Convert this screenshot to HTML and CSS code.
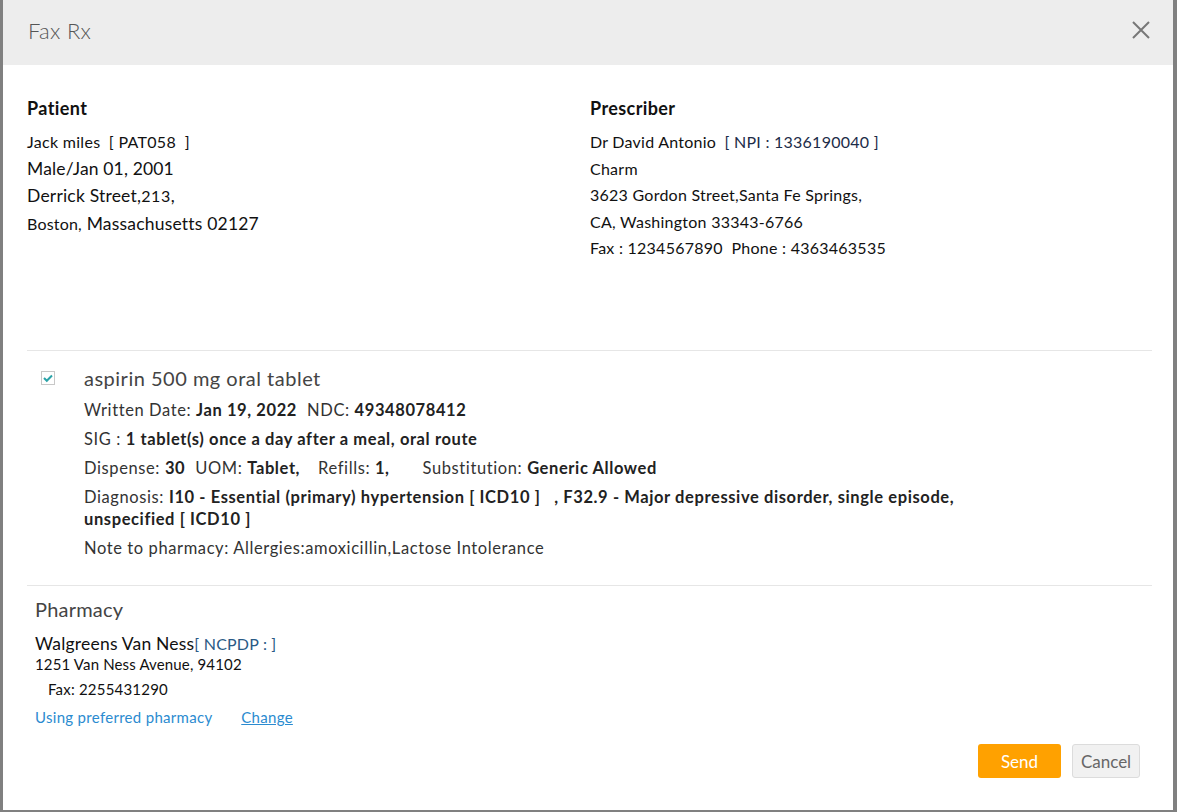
FILE: index.html
```html
<!DOCTYPE html>
<html lang="en">
  <head>
    <meta charset="UTF-8" />
    <title>Fax Rx</title>
    <link rel="stylesheet" href="styles.css">
  </head>
  <body>
    <div class="modal">
      <div class="modal-header">
        <span class="modal-title">Fax Rx</span>
        <button class="close" aria-label="Close">
          <svg width="18" height="18" viewBox="0 0 18 18">
            <path d="M1 1 L17 17 M17 1 L1 17" stroke="#777" stroke-width="2" fill="none" />
          </svg>
        </button>
      </div>

      <div class="modal-body">
        <div class="people">
          <div class="patient">
            <h3>Patient</h3>
            <div class="line small">Jack miles <span class="pid">[ PAT058&nbsp; ]</span></div>
            <div class="line big">Male/Jan 01, 2001</div>
            <div class="line big street">Derrick Street,<span class="num">213</span>,</div>
            <div class="line mid"><span class="num">Boston,</span> Massachusetts 02127</div>
          </div>
          <div class="prescriber">
            <h3>Prescriber</h3>
            <div class="line">Dr David Antonio <span class="ref">[ NPI : 1336190040 ]</span></div>
            <div class="line">Charm</div>
            <div class="line">3623 Gordon Street,Santa Fe Springs,</div>
            <div class="line">CA, Washington 33343-6766</div>
            <div class="line">Fax : 1234567890&nbsp; Phone : 4363463535</div>
          </div>
        </div>

        <div class="drug">
          <span class="check">
            <svg width="14" height="14" viewBox="0 0 14 14">
              <rect x="0.5" y="0.5" width="13" height="13" fill="#fff" stroke="#c8c8c8" />
              <path d="M3 7 L5.8 9.8 L11 4.5" stroke="#2aa3a8" stroke-width="2" fill="none" />
            </svg>
          </span>
          <div class="drug-info">
            <div class="drug-name">aspirin 500 mg oral tablet</div>
            <div class="row">Written Date: <b>Jan 19, 2022</b><span class="gap">NDC: <b>49348078412</b></span></div>
            <div class="row">SIG : <b>1 tablet(s) once a day after a meal, oral route</b></div>
            <div class="row">
              Dispense: <b>30</b><span class="gap">UOM: <b>Tablet,</b></span><span class="refills">Refills: <b>1,</b></span><span class="subst">Substitution: <b>Generic Allowed</b></span>
            </div>
            <div class="row">Diagnosis: <b>I10 - Essential (primary) hypertension [ ICD10 ] &nbsp; , F32.9 - Major depressive disorder, single episode,</b><br><b>unspecified [ ICD10 ]</b></div>
            <div class="row">Note to pharmacy: Allergies:amoxicillin,Lactose Intolerance</div>
          </div>
        </div>

        <div class="pharmacy">
          <h4>Pharmacy</h4>
          <div class="ph-name">Walgreens Van Ness<span class="ncpdp">[ NCPDP : ]</span></div>
          <div class="ph-line">1251 Van Ness Avenue, 94102</div>
          <div class="ph-fax">Fax: 2255431290</div>
          <div class="ph-links">
            <span class="preferred">Using preferred pharmacy</span>
            <a href="#" class="change">Change</a>
          </div>
        </div>
      </div>

      <div class="modal-footer">
        <button class="btn send">Send</button>
        <button class="btn cancel">Cancel</button>
      </div>
    </div>
  </body>
</html>
```

FILE: styles.css
```css
body {
  margin: 0;
  background: #808080;
  font-family: Lato, "Open Sans", sans-serif;
  height: 812px;
  overflow: hidden;
}
.modal {
  margin-left: 3px;
  width: 1170px;
  height: 810px;
  background: #fff;
}
.modal-header {
  height: 65px;
  background: #ededed;
  display: flex;
  align-items: center;
  justify-content: space-between;
  padding: 0 23px 0 25px;
}
.modal-title {
  font-size: 22px;
  font-weight: 300;
  letter-spacing: 0.3px;
  color: #555;
  margin-top: -4px;
}
.close {
  border: none;
  background: none;
  padding: 0;
  width: 18px;
  height: 18px;
  margin-top: -5px;
  cursor: pointer;
}
.modal-body {
  padding: 30px 21px 0 24px;
}
.people {
  display: grid;
  grid-template-columns: 563px 1fr;
  height: 255px;
  border-bottom: 1px solid #e6e6e6;
}
.people h3 {
  margin: 0 0 8px;
  font-size: 18px;
  line-height: 26px;
  font-weight: 700;
  letter-spacing: 0.4px;
  color: #111;
}
.patient .line {
  color: #111;
}
.line.small {
  font-size: 16px;
  line-height: 26px;
  letter-spacing: 0.3px;
}
.line.big {
  font-size: 17.5px;
  line-height: 27px;
  letter-spacing: 0.15px;
}
.line.street {
  letter-spacing: 0.2px;
}
.line.street .num {
  font-size: 16px;
  letter-spacing: 0.6px;
}
.line.mid {
  font-size: 17.5px;
  line-height: 29px;
  letter-spacing: 0.2px;
}
.num {
  font-size: 16px;
}
.pid {
  margin-left: 4px;
  color: #111;
}
.ref {
  color: #1c2c48;
  margin-left: 4px;
}
.prescriber .line {
  font-size: 16px;
  line-height: 26.5px;
  letter-spacing: 0.25px;
  color: #111;
}
.drug {
  display: flex;
  padding: 13px 0 26px 14px;
  border-bottom: 1px solid #e6e6e6;
}
.check {
  width: 14px;
  height: 14px;
  margin-top: 7px;
  margin-right: 29px;
  line-height: 0;
}
.drug-info {
  max-width: 880px;
  color: #333;
}
.drug-name {
  font-size: 20px;
  line-height: 28px;
  letter-spacing: 0.5px;
  color: #444;
  margin-bottom: 7px;
}
.row {
  font-size: 16.5px;
  line-height: 22px;
  letter-spacing: 0.6px;
  margin-bottom: 7px;
}
.row:last-child {
  margin-bottom: 0;
}
.row b {
  color: #222;
}
.gap {
  margin-left: 10px;
}
.refills {
  margin-left: 18px;
}
.subst {
  margin-left: 33px;
}
.pharmacy {
  padding: 11px 0 0 8px;
}
.pharmacy h4 {
  margin: 0 0 13px;
  font-size: 20px;
  line-height: 24px;
  font-weight: 400;
  letter-spacing: 0.2px;
  color: #444;
}
.ph-name {
  font-size: 17.5px;
  line-height: 20px;
  letter-spacing: 0.2px;
  color: #111;
}
.ncpdp {
  font-size: 16px;
  color: #2a5a85;
}
.ph-line {
  font-size: 15px;
  line-height: 20px;
  letter-spacing: 0.15px;
  color: #111;
}
.ph-fax {
  font-size: 15px;
  line-height: 20px;
  letter-spacing: 0.2px;
  margin: 5px 0 0 13px;
  color: #111;
}
.ph-links {
  font-size: 15px;
  line-height: 20px;
  letter-spacing: 0.3px;
  margin-top: 8px;
}
.preferred {
  color: #2b8bd0;
}
.change {
  color: #2b8bd0;
  margin-left: 25px;
}
.modal-footer {
  display: flex;
  justify-content: flex-end;
  gap: 11px;
  padding: 17px 33px 0 0;
}
.btn {
  height: 34px;
  border-radius: 3px;
  font-family: Lato, "Open Sans", sans-serif;
  font-size: 17px;
  cursor: pointer;
}
.send {
  width: 83px;
  background: #ffa100;
  color: #fff;
  border: none;
}
.cancel {
  width: 68px;
  background: #f1f1f1;
  color: #666;
  border: 1px solid #dcdcdc;
}
```
